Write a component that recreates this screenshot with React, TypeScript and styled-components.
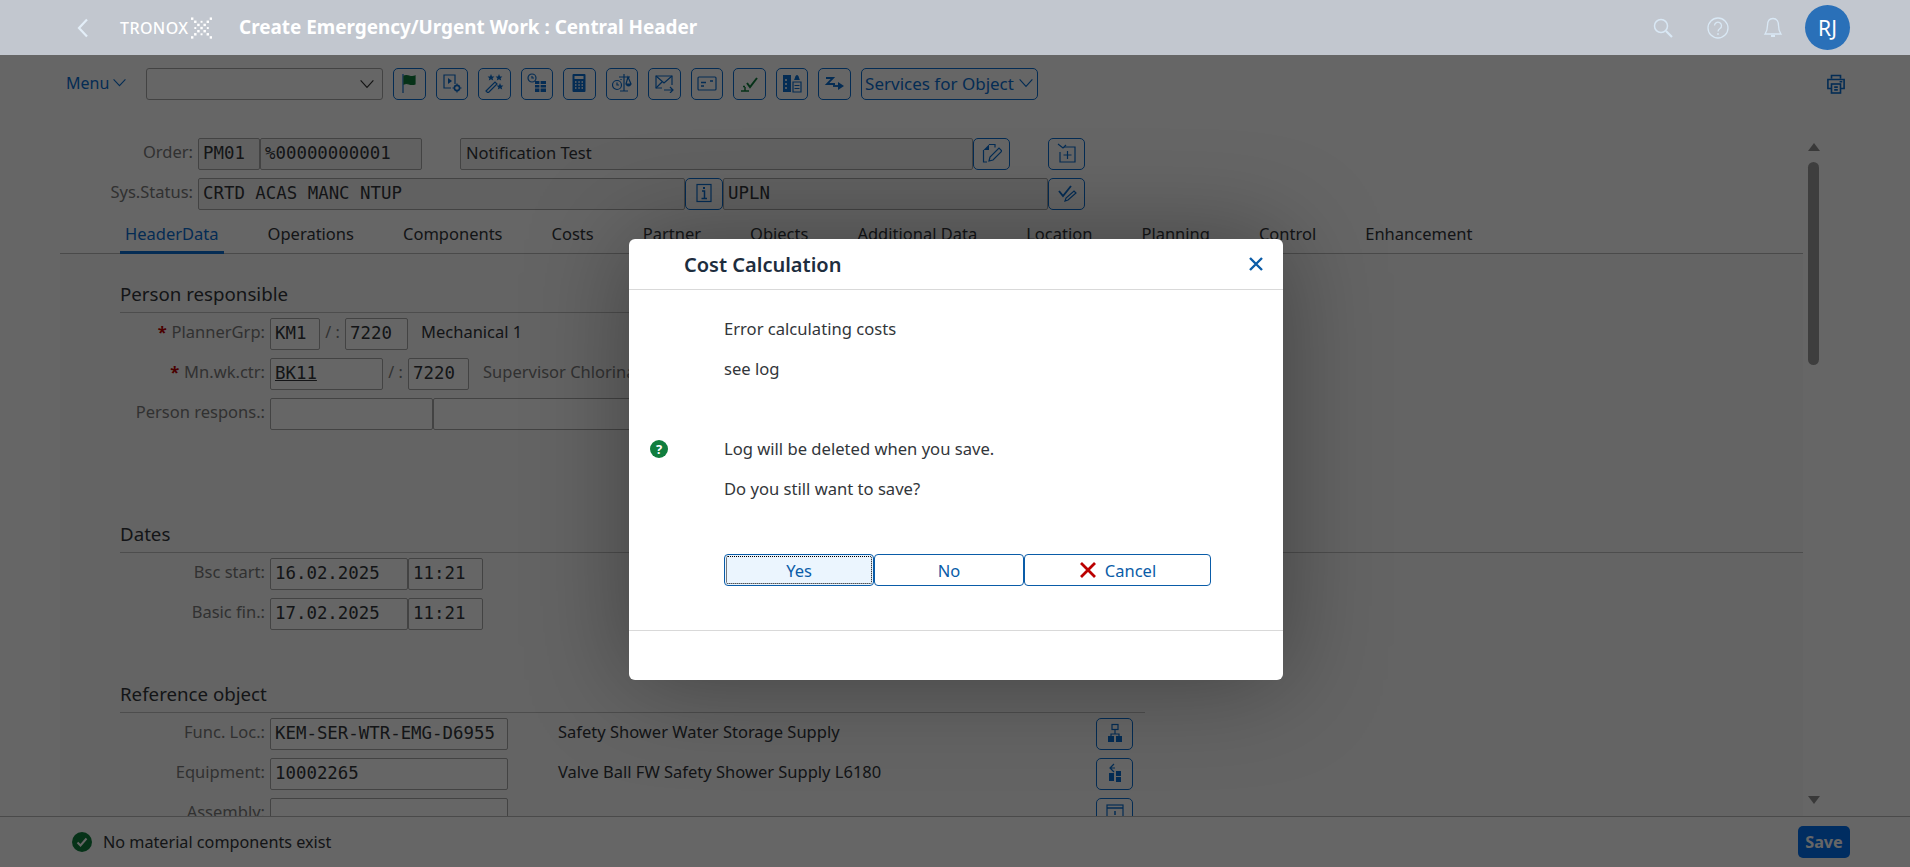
import React from "react";
import styled, { createGlobalStyle } from "styled-components";

const GlobalStyle = createGlobalStyle`
  html, body {
    margin: 0;
    padding: 0;
    height: 100%;
    background: #ffffff;
    font-family: "Noto Sans", "Liberation Sans", sans-serif;
    color: #32363a;
  }
  #root { height: 100%; }
`;

const MONO = `"DejaVu Sans Mono", "Liberation Mono", monospace`;
const BLUE = "#0a6ed1";

const Icon = ({ children, size = 20, color = BLUE }: { children: React.ReactNode; size?: number; color?: string }) => (
  <svg width={size} height={size} viewBox="0 0 20 20" fill="none" stroke={color} strokeWidth="1.2">
    {children}
  </svg>
);

const FlagIcon = () => (
  <Icon>
    <path d="M4 1v19" strokeWidth="1.2" />
    <path d="M5 3c4-2 6 2 11 0v8c-5 2-7-2-11 0z" fill="#107e3e" stroke="#107e3e" />
  </Icon>
);
const RunIcon = () => (
  <Icon>
    <path d="M13 11V2H2v13h7" />
    <path d="M6 5l4 3-4 3z" fill={BLUE} stroke="none" />
    <circle cx="15" cy="15" r="2.6" strokeWidth="1.6" />
    <path d="M15 10.5v1.5M15 18v1.5M10.5 15H12M18 15h1.5" />
  </Icon>
);
const WandIcon = () => (
  <Icon>
    <path d="M2 18L11 9l2 2L4 20z" />
    <path d="M7 1l1 2.4 2.400.2-1.800 1.600.6 2.300L7 6.300 4.800 7.500l.6-2.300L3.600 3.600 6 3.400zM15 1l1 2.400 2.400.2-1.800 1.600.6 2.300-2.200-1.200-2.200 1.200.6-2.300-1.800-1.600 2.400-.2zM16 10l1 2.400 2.400.2-1.800 1.600.6 2.300-2.200-1.200-2.200 1.200.6-2.300-1.800-1.600 2.400-.2z" fill={BLUE} stroke="none" />
  </Icon>
);
const ScheduleIcon = () => (
  <Icon>
    <circle cx="5" cy="5" r="4" />
    <path d="M5 3v2h2" />
    <path d="M8 8h11v11H8z" fill={BLUE} stroke="none" />
    <path d="M8 11.500h11M8 15h11M13 8v11" stroke="#fff" />
  </Icon>
);
const CalcIcon = () => (
  <Icon>
    <rect x="3.500" y="1" width="13" height="18" rx="1" fill={BLUE} stroke="none" />
    <rect x="5.500" y="3" width="9" height="3" fill="#fff" stroke="none" />
    <path d="M6 9h1.500M9.300 9h1.500M12.500 9H14M6 12h1.500M9.300 12h1.500M12.500 12H14M6 15h1.500M9.300 15h1.500M12.500 15H14" stroke="#fff" strokeWidth="1.500" />
  </Icon>
);
const ScaleIcon = () => (
  <Icon>
    <circle cx="5" cy="12" r="4.500" />
    <path d="M5 9.500V12h2M12 1v17M8 18h8M7 4h11M16 4l-2 7h5zM9 6v1" />
    <path d="M14 11a2.500 2.500 0 0 0 5 0z" fill={BLUE} stroke="none" />
  </Icon>
);
const MailIcon = () => (
  <Icon>
    <path d="M8 15H2V3h16v9" />
    <path d="M2 3l8 7 8-7M2 15l6-6" />
    <path d="M10 17h9M16 14l3 3-3 3" />
  </Icon>
);
const CardIcon = () => (
  <Icon>
    <rect x="1" y="4" width="18" height="13" rx="1" />
    <path d="M4 9.500h5M4 13h3M13 8h3" strokeWidth="1.500" />
  </Icon>
);
const CheckLineIcon = () => (
  <Icon>
    <path d="M8 10l3 4 7-9" stroke="#107e3e" strokeWidth="2" />
    <path d="M2 18h8M6 18v-4M4 13.500h2" stroke="#107e3e" strokeWidth="1.500" />
  </Icon>
);
const BellListIcon = () => (
  <Icon>
    <path d="M1 2h8v17H1z" fill={BLUE} stroke="none" />
    <path d="M3 7h2M3 11h2M3 15h2" stroke="#fff" strokeWidth="1.500" />
    <path d="M11 9h8v10h-8zM12.500 12.500h5M12.500 15.500h5" />
    <path d="M12 7c1-1 1-5 3-5s2 4 3 5z" fill={BLUE} stroke="none" />
  </Icon>
);
const ZArrowIcon = () => (
  <Icon>
    <path d="M2 5h7L3 11h8" strokeWidth="1.800" />
    <path d="M9 13h6" strokeWidth="1.800" />
    <path d="M14 9l6 4-6 4z" fill={BLUE} stroke="none" />
  </Icon>
);
const NoteEditIcon = () => (
  <Icon>
    <path d="M7 1.500h6v3M1.500 7v12H5" />
    <path d="M1.500 7L7 1.500V7z" fill={BLUE} stroke="none" />
    <path d="M7 18l1-4 9-9 3 3-9 9z" />
  </Icon>
);
const AddBoxIcon = () => (
  <Icon>
    <path d="M7 4h11v15H3V9" />
    <path d="M1 1l5 4 3-3" />
    <path d="M10.500 8v8M6.500 12h8" />
  </Icon>
);
const CheckEditIcon = () => (
  <Icon>
    <path d="M2 8l4 5 8-10" strokeWidth="1.900" />
    <path d="M8 18l1-3 8-7 2 2-8 7z" />
  </Icon>
);
const InfoBoxIcon = () => (
  <Icon>
    <rect x="3" y="1.500" width="14" height="17" />
    <path d="M8 8h2.500v7M7.500 15.500h5.500" strokeWidth="1.500" />
    <rect x="9" y="4" width="2" height="2" fill={BLUE} stroke="none" />
  </Icon>
);
const HierarchyIcon = () => (
  <Icon>
    <rect x="7" y="1.500" width="6" height="5" />
    <path d="M10 6.500V11M6 13v-2h8v2" />
    <rect x="3" y="13" width="6" height="6" fill={BLUE} stroke="none" />
    <rect x="11" y="13" width="6" height="6" fill={BLUE} stroke="none" />
  </Icon>
);
const StructureIcon = () => (
  <Icon>
    <path d="M9 1L5 5l4 4M5 5h5" />
    <rect x="4" y="10" width="5" height="8" fill={BLUE} stroke="none" />
    <rect x="11" y="8" width="5" height="5" fill={BLUE} stroke="none" />
    <rect x="11" y="14" width="5" height="5" fill={BLUE} stroke="none" />
  </Icon>
);
const AssemblyIcon = () => (
  <Icon>
    <rect x="2" y="2" width="16" height="16" />
    <path d="M2 5h16M10 8v4M10 13.500v1.500" strokeWidth="1.500" />
  </Icon>
);
const Chevron = ({ size = 14, color = "currentColor" }: { size?: number; color?: string }) => (
  <svg width={size} height={size * 0.7} viewBox="0 0 14 10" fill="none" stroke={color} strokeWidth="1.200">
    <path d="M0.500 1.500L7 8.500l6.500-7" />
  </svg>
);

// snowflake-like cross of small squares in the Tronox logo
const TronoxMark = () => {
  const cells = [];
  for (let r = 0; r < 7; r++) {
    for (let c = 0; c < 7; c++) {
      const onCross = r === c || r + c === 6;
      const onAxis = (r === 3 || c === 3) && (r + c) % 2 === 0;
      if (onCross || onAxis) {
        const s = onCross ? 2.500 : 2;
        const x = c * 3.200 + 1.200;
        const y = r * 3.200 + 1.200;
        cells.push(<rect key={`${r}-${c}`} x={x - s / 2} y={y - s / 2} width={s} height={s} fill="#ffffff" />);
      }
    }
  }
  return <svg width="21" height="22" viewBox="0 0 21.500 21.500">{cells}</svg>;
};

const Page = styled.div`
  position: relative;
  height: 867px;
  display: flex;
  flex-direction: column;
  overflow: hidden;
`;

const ShellBar = styled.header`
  height: 55px;
  flex: none;
  display: flex;
  align-items: center;
  background: #c2c7cf;
  padding: 0 60px 0 76px;
  color: #ffffff;
`;

const BackButton = styled.span`
  display: flex;
  width: 44px;
`;

const Logo = styled.span`
  display: flex;
  align-items: center;
  gap: 3px;
  width: 119px;
  font-size: 16px;
  letter-spacing: 0.4px;
  font-weight: 500;
`;

const ShellTitle = styled.h1`
  margin: 0;
  font-size: 18.900px;
  font-weight: 700;
  flex: 1;
  line-height: 55px;
`;

const ShellIcon = styled.span`
  display: flex;
  justify-content: center;
  width: 55px;
`;

const Avatar = styled.span`
  width: 45px;
  height: 45px;
  margin-left: 5px;
  border-radius: 50%;
  background: #2a70b8;
  display: flex;
  align-items: center;
  justify-content: center;
  font-size: 21px;
`;

const Main = styled.main`
  flex: 1;
  min-height: 0;
  display: flex;
  flex-direction: column;
`;

const Toolbar = styled.div`
  flex: none;
  display: flex;
  align-items: center;
  gap: 10px;
  height: 32px;
  margin-top: 13px;
  padding: 0 65px 0 66px;
`;

const MenuButton = styled.span`
  display: flex;
  align-items: center;
  gap: 4px;
  width: 70px;
  padding-bottom: 2px;
  font-size: 16px;
  color: ${BLUE};
`;

const Select = styled.div`
  box-sizing: border-box;
  width: 237px;
  height: 32px;
  border: 1px solid #a8a8a8;
  border-radius: 3px;
  display: flex;
  align-items: center;
  justify-content: flex-end;
  padding-right: 8px;
  color: #333;
`;

const ToolButton = styled.button<{ $width?: number; $left?: number }>`
  box-sizing: border-box;
  width: ${({ $width }) => $width ?? 32.500}px;
  height: 32px;
  flex: none;
  margin-left: ${({ $left }) => $left ?? 0}px;
  padding: 0 0 2px;
  display: flex;
  align-items: center;
  justify-content: center;
  gap: 5px;
  background: #ffffff;
  border: 1px solid ${BLUE};
  border-radius: 5px;
  color: ${BLUE};
  font: inherit;
  font-size: 17px;
`;

const PrintSlot = styled.span`
  margin-left: auto;
  display: flex;
`;

const Middle = styled.div`
  flex: 1;
  min-height: 0;
  display: flex;
`;

const Pane = styled.div`
  flex: 1;
  min-width: 0;
  overflow: hidden;
  display: flex;
  flex-direction: column;
  padding-top: 30px;
  padding-right: 5px;
`;

const HeadRow = styled.div`
  flex: none;
  display: flex;
  align-items: center;
  height: 32px;
  margin-top: 8px;
`;

const HeadLabel = styled.label`
  width: 193px;
  margin-right: 5px;
  padding-bottom: 5px;
  text-align: right;
  font-size: 16.500px;
  color: #7a7a7a;
`;

const Field = styled.div<{ $width: number; $grey?: boolean; $sans?: boolean; $left?: number }>`
  box-sizing: border-box;
  flex: none;
  width: ${({ $width }) => $width}px;
  height: 32px;
  margin-left: ${({ $left }) => $left ?? 0}px;
  padding-left: ${({ $sans }) => ($sans ? 5 : 4)}px;
  border: 1px solid #a8a8a8;
  border-radius: 2px;
  background: ${({ $grey }) => ($grey ? "#f3f3f3" : "#ffffff")};
  font-family: ${({ $sans }) => ($sans ? "inherit" : MONO)};
  font-size: ${({ $sans }) => ($sans ? "16.500px" : "17.400px")};
  line-height: ${({ $sans }) => ($sans ? 27 : 29)}px;
  white-space: pre;
  color: #32363a;
`;

const Tabs = styled.nav`
  flex: none;
  display: flex;
  gap: 39px;
  height: 42px;
  margin: 1px 0 0 60px;
  padding-left: 60px;
  border-bottom: 1px solid #b8b8b8;
`;

const Tab = styled.span<{ $active?: boolean }>`
  box-sizing: border-box;
  height: 43px;
  padding: 11px 5px 0;
  font-size: 16.500px;
  color: ${({ $active }) => ($active ? BLUE : "#32363a")};
  border-bottom: ${({ $active }) => ($active ? `3px solid ${BLUE}` : "none")};
`;

const TabPanel = styled.div`
  flex: 1;
  margin-left: 60px;
  padding-left: 60px;
  background: #fafafa;
`;

const Section = styled.section<{ $top: number; $width?: number }>`
  margin-top: ${({ $top }) => $top}px;
  ${({ $width }) => $width && `width: ${$width}px;`}
`;

const SectionTitle = styled.h2`
  box-sizing: border-box;
  margin: 0 0 5px;
  height: 32px;
  padding-bottom: 6px;
  font-size: 18.700px;
  line-height: 25px;
  font-weight: 400;
  color: #32363a;
  border-bottom: 1px solid #c0c0c0;
`;

const Row = styled.div`
  display: flex;
  align-items: center;
  height: 32px;
  margin-bottom: 8px;
`;

const RowLabel = styled.label`
  width: 145px;
  margin-right: 5px;
  padding-bottom: 5px;
  flex: none;
  text-align: right;
  font-size: 16.500px;
  white-space: nowrap;
  color: #7a7a7a;
`;

const Star = styled.span`
  color: #bb0000;
  font-weight: 700;
  margin-right: 5px;
`;

const Slash = styled.span`
  width: 25px;
  padding-bottom: 5px;
  text-align: center;
  font-size: 16px;
  color: #7a7a7a;
`;

const RowText = styled.span<{ $left: number; $width?: number; $muted?: boolean }>`
  margin-left: ${({ $left }) => $left}px;
  padding-bottom: 5px;
  font-size: 16.500px;
  white-space: nowrap;
  color: ${({ $muted }) => ($muted ? "#7a7a7a" : "#32363a")};
  ${({ $width }) => $width && `width: ${$width}px;`}
`;

const Scrollbar = styled.div`
  flex: none;
  width: 11px;
  margin-right: 91px;
  display: flex;
  flex-direction: column;
  align-items: center;
  padding-top: 43px;
`;

const ArrowUp = styled.span`
  width: 0;
  height: 0;
  border-left: 6px solid transparent;
  border-right: 6px solid transparent;
  border-bottom: 8px solid #909090;
`;

const ArrowDown = styled(ArrowUp)`
  margin-top: auto;
  margin-bottom: 12px;
  border-bottom: none;
  border-top: 8px solid #909090;
`;

const Thumb = styled.span`
  width: 11px;
  height: 203px;
  margin-top: 11px;
  border-radius: 6px;
  background: #9c9c9c;
`;

const StatusBar = styled.footer`
  box-sizing: border-box;
  flex: none;
  height: 51px;
  display: flex;
  align-items: center;
  gap: 11px;
  padding: 0 60px 0 72px;
  border-top: 1px solid #b8b8b8;
  font-size: 16.200px;
  background: #ffffff;
`;

const SaveButton = styled.button`
  margin-left: auto;
  width: 52px;
  height: 32px;
  padding: 0;
  border: none;
  border-radius: 5px;
  background: #0070f2;
  color: #ffffff;
  font: inherit;
  font-weight: 700;
`;

const Overlay = styled.div`
  position: absolute;
  inset: 55px 0 0 0;
  background: rgba(0, 0, 0, 0.6);
  display: flex;
  align-items: center;
  justify-content: center;
`;

const Dialog = styled.div`
  width: 654px;
  height: 441px;
  margin: 0 0 3px 2px;
  background: #ffffff;
  border-radius: 6px;
  box-shadow: 0 0 100px rgba(0, 0, 0, 0.35);
  display: flex;
  flex-direction: column;
`;

const DialogHead = styled.div`
  box-sizing: border-box;
  flex: none;
  height: 51px;
  display: flex;
  align-items: center;
  justify-content: space-between;
  padding: 0 19px 0 55px;
  border-bottom: 1px solid #d9d9d9;
`;

const DialogTitle = styled.h2`
  margin: 0;
  font-size: 20px;
  font-weight: 600;
  color: #1d2d3e;
`;

const DialogBody = styled.div`
  flex: 1;
  display: flex;
  flex-direction: column;
  padding: 23px 0 0 95px;
  position: relative;
`;

const Message = styled.p<{ $gap?: number }>`
  margin: ${({ $gap }) => $gap ?? 0}px 0 0;
  font-size: 16.600px;
  line-height: 32px;
  height: 32px;
  color: #32363a;
  display: flex;
  align-items: center;
`;

const QuestionBadge = styled.span`
  position: absolute;
  left: 21px;
  top: 150px;
  width: 18px;
  height: 18px;
  border-radius: 50%;
  background: #107e3e;
  color: #ffffff;
  font-size: 13px;
  font-weight: 700;
  line-height: 18px;
  text-align: center;
`;

const ButtonRow = styled.div`
  display: flex;
  margin-top: 49px;
`;

const DialogButton = styled.button<{ $width: number; $focused?: boolean }>`
  box-sizing: border-box;
  width: ${({ $width }) => $width}px;
  height: 32px;
  display: flex;
  align-items: center;
  justify-content: center;
  gap: 8px;
  padding: 0;
  background: ${({ $focused }) => ($focused ? "#ebf5fe" : "#ffffff")};
  border: 1px solid #0a5ca8;
  border-radius: 4px;
  color: #0a5ca8;
  font: inherit;
  font-size: 16.500px;
  ${({ $focused }) => $focused && "outline: 1px dotted #000000; outline-offset: -3px;"}
`;

const DialogFoot = styled.div`
  flex: none;
  height: 49px;
  border-top: 1px solid #d9d9d9;
`;

const Tick = () => (
  <svg width="20" height="20" viewBox="0 0 20 20">
    <circle cx="10" cy="10" r="10" fill="#107e3e" />
    <path d="M5.500 10.500l3 3 6-7" fill="none" stroke="#fff" strokeWidth="2" />
  </svg>
);

const tabs = ["HeaderData", "Operations", "Components", "Costs", "Partner", "Objects", "Additional Data", "Location", "Planning", "Control", "Enhancement"];

export default function App() {
  return (
    <Page>
      <GlobalStyle />
      <ShellBar>
        <BackButton>
          <svg width="14" height="20" viewBox="0 0 14 20" fill="none" stroke="#e3eef8" strokeWidth="2.200"><path d="M11 1.500L3 10l8 8.500" /></svg>
        </BackButton>
        <Logo>TRONOX<TronoxMark /></Logo>
        <ShellTitle>Create Emergency/Urgent Work : Central Header</ShellTitle>
        <ShellIcon>
          <svg width="20" height="20" viewBox="0 0 20 20" fill="none" stroke="#d9e8f5" strokeWidth="1.500"><circle cx="8" cy="8" r="6.500" /><path d="M13 13l6 6" strokeWidth="2.200" /></svg>
        </ShellIcon>
        <ShellIcon>
          <svg width="22" height="22" viewBox="0 0 22 22" fill="none" stroke="#d9e8f5" strokeWidth="1.300"><circle cx="11" cy="11" r="10" /><path d="M7.500 8.500a3.500 3.500 0 1 1 5.500 3c-1.500 1-2 1.500-2 3" /><path d="M11 16v2" /></svg>
        </ShellIcon>
        <ShellIcon>
          <svg width="20" height="22" viewBox="0 0 20 22" fill="none" stroke="#d9e8f5" strokeWidth="1.300"><path d="M10 1.500c-4 0-5.500 3-5.500 7 0 5-1.500 7-2.500 8.500h16c-1-1.500-2.500-3.500-2.500-8.500 0-4-1.500-7-5.500-7z" /><path d="M8 19h4" strokeWidth="2" /></svg>
        </ShellIcon>
        <Avatar>RJ</Avatar>
      </ShellBar>
      <Main>
        <Toolbar>
          <MenuButton>Menu <Chevron size={13} /></MenuButton>
          <Select><Chevron size={14} /></Select>
          <ToolButton><FlagIcon /></ToolButton>
          <ToolButton><RunIcon /></ToolButton>
          <ToolButton><WandIcon /></ToolButton>
          <ToolButton><ScheduleIcon /></ToolButton>
          <ToolButton><CalcIcon /></ToolButton>
          <ToolButton><ScaleIcon /></ToolButton>
          <ToolButton><MailIcon /></ToolButton>
          <ToolButton><CardIcon /></ToolButton>
          <ToolButton><CheckLineIcon /></ToolButton>
          <ToolButton><BellListIcon /></ToolButton>
          <ToolButton><ZArrowIcon /></ToolButton>
          <ToolButton $width={177}>Services for Object <Chevron size={14} /></ToolButton>
          <PrintSlot>
            <svg width="18" height="20" viewBox="0 0 20 22" fill="none" stroke={BLUE} strokeWidth="1.800"><path d="M5 5V1.500h10V5M5 16H1V6h18v10h-4" /><rect x="5" y="11" width="10" height="10" /><path d="M8 14.500h4M8 17.500h4M14 8.500h3" /></svg>
          </PrintSlot>
        </Toolbar>
        <Middle>
          <Pane>
            <HeadRow>
              <HeadLabel>Order:</HeadLabel>
              <Field $width={62} $grey>PM01</Field>
              <Field $width={162} $grey>%00000000001</Field>
              <Field $width={513} $grey $sans $left={38}>Notification Test</Field>
              <ToolButton $width={37}><NoteEditIcon /></ToolButton>
              <ToolButton $width={37} $left={38}><AddBoxIcon /></ToolButton>
            </HeadRow>
            <HeadRow>
              <HeadLabel>Sys.Status:</HeadLabel>
              <Field $width={487} $grey>CRTD ACAS MANC NTUP</Field>
              <ToolButton $width={38}><InfoBoxIcon /></ToolButton>
              <Field $width={325} $grey>UPLN</Field>
              <ToolButton $width={37}><CheckEditIcon /></ToolButton>
            </HeadRow>
            <Tabs>
              {tabs.map((t, i) => <Tab key={t} $active={i === 0}>{t}</Tab>)}
            </Tabs>
            <TabPanel>
              <Section $top={27} $width={1025}>
                <SectionTitle>Person responsible</SectionTitle>
                <Row>
                  <RowLabel><Star>*</Star>PlannerGrp:</RowLabel>
                  <Field $width={50}>KM1</Field>
                  <Slash>/ :</Slash>
                  <Field $width={63}>7220</Field>
                  <RowText $left={13}>Mechanical 1</RowText>
                </Row>
                <Row>
                  <RowLabel><Star>*</Star>Mn.wk.ctr:</RowLabel>
                  <Field $width={113}><u>BK11</u></Field>
                  <Slash>/ :</Slash>
                  <Field $width={61}>7220</Field>
                  <RowText $left={14} $muted>Supervisor Chlorination</RowText>
                </Row>
                <Row>
                  <RowLabel>Person respons.:</RowLabel>
                  <Field $width={163} />
                  <Field $width={300} />
                </Row>
              </Section>
              <Section $top={91}>
                <SectionTitle>Dates</SectionTitle>
                <Row>
                  <RowLabel>Bsc start:</RowLabel>
                  <Field $width={138}>16.02.2025</Field>
                  <Field $width={75}>11:21</Field>
                </Row>
                <Row>
                  <RowLabel>Basic fin.:</RowLabel>
                  <Field $width={138}>17.02.2025</Field>
                  <Field $width={75}>11:21</Field>
                </Row>
              </Section>
              <Section $top={51} $width={1025}>
                <SectionTitle>Reference object</SectionTitle>
                <Row>
                  <RowLabel>Func. Loc.:</RowLabel>
                  <Field $width={238}>KEM-SER-WTR-EMG-D6955</Field>
                  <RowText $left={50} $width={538}>Safety Shower Water Storage Supply</RowText>
                  <ToolButton $width={37}><HierarchyIcon /></ToolButton>
                </Row>
                <Row>
                  <RowLabel>Equipment:</RowLabel>
                  <Field $width={238}>10002265</Field>
                  <RowText $left={50} $width={538}>Valve Ball FW Safety Shower Supply L6180</RowText>
                  <ToolButton $width={37}><StructureIcon /></ToolButton>
                </Row>
                <Row>
                  <RowLabel>Assembly:</RowLabel>
                  <Field $width={238} />
                  <RowText $left={50} $width={538} />
                  <ToolButton $width={37}><AssemblyIcon /></ToolButton>
                </Row>
              </Section>
            </TabPanel>
          </Pane>
          <Scrollbar>
            <ArrowUp />
            <Thumb />
            <ArrowDown />
          </Scrollbar>
        </Middle>
        <StatusBar>
          <Tick />
          <span>No material components exist</span>
          <SaveButton>Save</SaveButton>
        </StatusBar>
      </Main>
      <Overlay>
        <Dialog>
          <DialogHead>
            <DialogTitle>Cost Calculation</DialogTitle>
            <svg width="16" height="16" viewBox="0 0 16 16" stroke="#0a5ca8" strokeWidth="2.400"><path d="M2 2l12 12M14 2L2 14" /></svg>
          </DialogHead>
          <DialogBody>
            <Message>Error calculating costs</Message>
            <Message $gap={8}>see log</Message>
            <Message $gap={48}>Log will be deleted when you save.</Message>
            <Message $gap={8}>Do you still want to save?</Message>
            <QuestionBadge>?</QuestionBadge>
            <ButtonRow>
              <DialogButton $width={150} $focused>Yes</DialogButton>
              <DialogButton $width={150}>No</DialogButton>
              <DialogButton $width={187}>
                <svg width="18" height="18" viewBox="0 0 18 18" stroke="#bb0000" strokeWidth="2.800"><path d="M2 2l14 14M16 2L2 16" /></svg>
                Cancel
              </DialogButton>
            </ButtonRow>
          </DialogBody>
          <DialogFoot />
        </Dialog>
      </Overlay>
    </Page>
  );
}
